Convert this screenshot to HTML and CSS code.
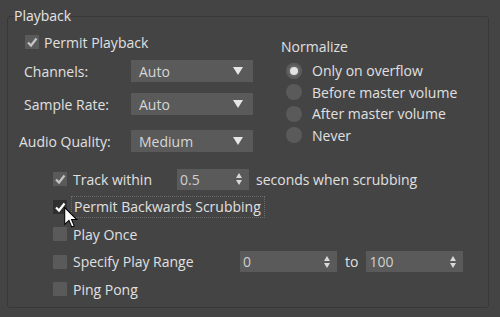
FILE: index.html
```html
<!DOCTYPE html>
<html lang="en">
<head>
    <meta charset="UTF-8">
    <title>Playback</title>
    <link rel="stylesheet" href="styles.css">
</head>
<body>
    <fieldset class="group">
        <legend>Playback</legend>

        <div class="top">
            <div class="left">
                <div class="check-row first">
                    <span class="box checked"><svg viewBox="0 0 14 14"><path d="M3 7.5 L6 10.5 L11.5 3.5"/></svg></span>
                    <span class="text">Permit Playback</span>
                </div>
                <div class="field">
                    <span class="label">Channels:</span>
                    <div class="dropdown">Auto<span class="arrow"></span></div>
                </div>
                <div class="field gap-md">
                    <span class="label">Sample Rate:</span>
                    <div class="dropdown">Auto<span class="arrow"></span></div>
                </div>
                <div class="field gap-lg">
                    <span class="label shift">Audio Quality:</span>
                    <div class="dropdown">Medium<span class="arrow"></span></div>
                </div>
            </div>

            <div class="right">
                <div class="heading">Normalize</div>
                <div class="radio-row"><span class="radio on"></span>Only on overflow</div>
                <div class="radio-row"><span class="radio"></span>Before master volume</div>
                <div class="radio-row"><span class="radio"></span>After master volume</div>
                <div class="radio-row"><span class="radio"></span>Never</div>
            </div>
        </div>

        <div class="bottom">
            <div class="check-row">
                <span class="box checked"><svg viewBox="0 0 14 14"><path d="M3 7.5 L6 10.5 L11.5 3.5"/></svg></span>
                <span class="text track">Track within</span>
                <div class="spinner short">0.5<span class="spin"></span></div>
                <span class="text after">seconds when scrubbing</span>
            </div>
            <div class="check-row">
                <span class="box focused"><svg viewBox="0 0 14 14"><path d="M3 7.5 L6 10.5 L11.5 3.5"/></svg></span>
                <span class="text focus-ring">Permit Backwards Scrubbing</span>
            </div>
            <div class="check-row">
                <span class="box"></span>
                <span class="text">Play Once</span>
            </div>
            <div class="check-row">
                <span class="box"></span>
                <span class="text range">Specify Play Range</span>
                <div class="spinner wide">0<span class="spin"></span></div>
                <span class="text to">to</span>
                <div class="spinner wide">100<span class="spin"></span></div>
            </div>
            <div class="check-row">
                <span class="box"></span>
                <span class="text">Ping Pong</span>
            </div>
        </div>
    </fieldset>

    <svg class="cursor" viewBox="0 0 13 21" width="14" height="22">
        <path d="M0.5 0.5 L0.5 16.5 L4.5 12.8 L7.2 19 L9.6 18 L7 12 L12 12 Z" fill="#fff" stroke="#000" stroke-width="1"/>
    </svg>
</body>
</html>
```

FILE: styles.css
```css
body {
    margin: 0;
    background-color: #444444;
    font-family: 'Open Sans', 'Noto Sans', sans-serif;
    font-size: 14px;
    color: #e0e0e0;
    width: 500px;
    height: 317px;
    overflow: hidden;
    position: relative;
}
.group {
    margin: 8px 11px 0 7px;
    padding: 0;
    height: 300px;
    box-sizing: border-box;
    border: 1px solid #383838;
    border-radius: 3px;
}
legend {
    margin-left: 6px;
    padding: 0;
    line-height: 16px;
    color: #e4e4e4;
}
.top {
    display: flex;
}
.left {
    width: 272px;
}
.check-row {
    display: flex;
    align-items: center;
    height: 22px;
    padding-left: 45px;
    margin-top: 5.5px;
}
.check-row.first {
    padding-left: 17px;
    margin-top: 7px;
}
.box {
    width: 14px;
    height: 14px;
    background: #5a5a5a;
    flex-shrink: 0;
    display: flex;
}
.box svg {
    width: 14px;
    height: 14px;
    fill: none;
    stroke: #c4c4c4;
    stroke-width: 2.2;
}
.box.focused {
    background: #2f2f2f;
}
.box.focused svg {
    stroke: #ffffff;
}
.text {
    margin-left: 6px;
    white-space: nowrap;
}
.first .text {
    margin-left: 5px;
}
.track {
    width: 104px;
}
.after {
    margin-left: 7px;
}
.range {
    width: 167px;
}
.to {
    margin: 0 8px;
}
.focus-ring {
    margin-left: 4px;
    padding: 2px 3px 2px 2px;
    line-height: 16px;
    border: 1px dotted #6a6a6a;
}
.field {
    display: flex;
    align-items: center;
    height: 22px;
    margin-top: 7px;
}
.field.gap-md {
    margin-top: 11px;
}
.field.gap-lg {
    margin-top: 15px;
}
.label {
    width: 107px;
    padding-left: 16px;
}
.label.shift {
    width: 112px;
    padding-left: 11px;
}
.dropdown {
    width: 122px;
    height: 22px;
    box-sizing: border-box;
    padding-left: 8px;
    background: #5a5a5a;
    display: flex;
    align-items: center;
    justify-content: space-between;
    color: #d6d6d6;
}
.arrow {
    width: 0;
    height: 0;
    margin-right: 10px;
    border-left: 5px solid transparent;
    border-right: 5px solid transparent;
    border-top: 8px solid #e6e6e6;
}
.right {
    padding-left: 1px;
}
.heading {
    margin-top: 15px;
    line-height: 16px;
}
.radio-row {
    display: flex;
    align-items: center;
    height: 21.5px;
}
.heading + .radio-row {
    margin-top: 5px;
}
.radio {
    width: 16px;
    height: 16px;
    border-radius: 50%;
    background: #5a5a5a;
    margin: 0 10px 0 5px;
    position: relative;
}
.radio.on {
    background: #666666;
    box-shadow: inset 0 0 0 2px #595959;
}
.radio.on::after {
    content: "";
    position: absolute;
    left: 4px;
    top: 4px;
    width: 8px;
    height: 8px;
    border-radius: 50%;
    background: #e4e4e4;
}
.bottom {
    margin-top: 16px;
}
.spinner {
    height: 21px;
    box-sizing: border-box;
    padding-left: 3px;
    background: #5a5a5a;
    display: flex;
    align-items: center;
    justify-content: space-between;
    color: #d0d0d0;
    flex-shrink: 0;
}
.spinner.short {
    width: 72px;
}
.spinner.wide {
    width: 97px;
}
.spin {
    position: relative;
    width: 7px;
    height: 12px;
    margin-right: 6px;
}
.spin::before,
.spin::after {
    content: "";
    position: absolute;
    left: 0;
    border-left: 3.5px solid transparent;
    border-right: 3.5px solid transparent;
}
.spin::before {
    top: 0;
    border-bottom: 5px solid #d8d8d8;
}
.spin::after {
    bottom: 0;
    border-top: 5px solid #d8d8d8;
}
.cursor {
    position: absolute;
    left: 64px;
    top: 207px;
}
```
